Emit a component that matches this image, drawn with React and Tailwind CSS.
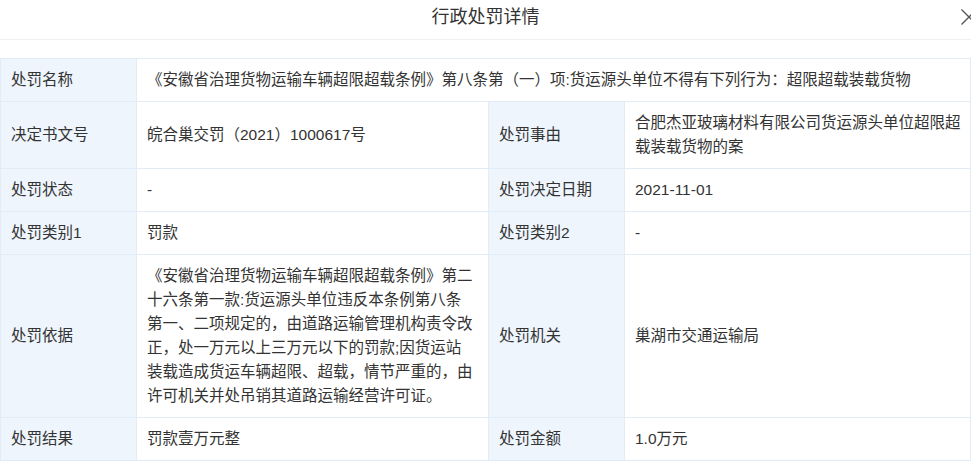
import React from 'react';

const font = { fontFamily: '"Liberation Sans", "Noto Sans CJK SC", sans-serif' };

function Label({ children }) {
  return (
    <td className="bg-[#eef5fd] border border-[#e2ecf6] px-[10px] py-[9px] align-middle text-[#333]">
      {children}
    </td>
  );
}

function Value({ children, colSpan }) {
  return (
    <td colSpan={colSpan} className="bg-white border border-[#e2ecf6] px-[10px] py-[9px] align-middle text-[#333] whitespace-nowrap">
      {children}
    </td>
  );
}

export default function App() {
  return (
    <div className="w-[971px] h-[468px] bg-white overflow-hidden" style={font}>
      <header className="relative h-[40px] border-b border-[#eef0f3] flex items-center justify-center">
        <h1 className="text-[18px] text-[#333] leading-none -mt-[6px]">行政处罚详情</h1>
        <svg className="absolute left-[961px] top-[9px]" width="16" height="16" viewBox="0 0 16 16">
          <path d="M0.5 0.5 L15.5 15.5 M15.5 0.5 L0.5 15.5" stroke="#555" strokeWidth="1.3" fill="none" />
        </svg>
      </header>

      <table className="mt-[18px] w-full border-collapse text-[15.5px] leading-[24px] table-fixed">
        <colgroup>
          <col className="w-[136px]" />
          <col className="w-[352px]" />
          <col className="w-[136px]" />
          <col />
        </colgroup>
        <tbody>
          <tr>
            <Label>处罚名称</Label>
            <Value colSpan={3}>《安徽省治理货物运输车辆超限超载条例》第八条第（一）项:货运源头单位不得有下列行为：超限超载装载货物</Value>
          </tr>
          <tr>
            <Label>决定书文号</Label>
            <Value>皖合巢交罚（2021）1000617号</Value>
            <Label>处罚事由</Label>
            <Value>
              合肥杰亚玻璃材料有限公司货运源头单位超限超
              <br />
              载装载货物的案
            </Value>
          </tr>
          <tr>
            <Label>处罚状态</Label>
            <Value>-</Value>
            <Label>处罚决定日期</Label>
            <Value>2021-11-01</Value>
          </tr>
          <tr>
            <Label>处罚类别1</Label>
            <Value>罚款</Value>
            <Label>处罚类别2</Label>
            <Value>-</Value>
          </tr>
          <tr>
            <Label>处罚依据</Label>
            <Value>
              《安徽省治理货物运输车辆超限超载条例》第二
              <br />
              十六条第一款:货运源头单位违反本条例第八条
              <br />
              第一、二项规定的，由道路运输管理机构责令改
              <br />
              正，处一万元以上三万元以下的罚款;因货运站
              <br />
              装载造成货运车辆超限、超载，情节严重的，由
              <br />
              许可机关并处吊销其道路运输经营许可证。
            </Value>
            <Label>处罚机关</Label>
            <Value>巢湖市交通运输局</Value>
          </tr>
          <tr>
            <Label>处罚结果</Label>
            <Value>罚款壹万元整</Value>
            <Label>处罚金额</Label>
            <Value>1.0万元</Value>
          </tr>
        </tbody>
      </table>
    </div>
  );
}
